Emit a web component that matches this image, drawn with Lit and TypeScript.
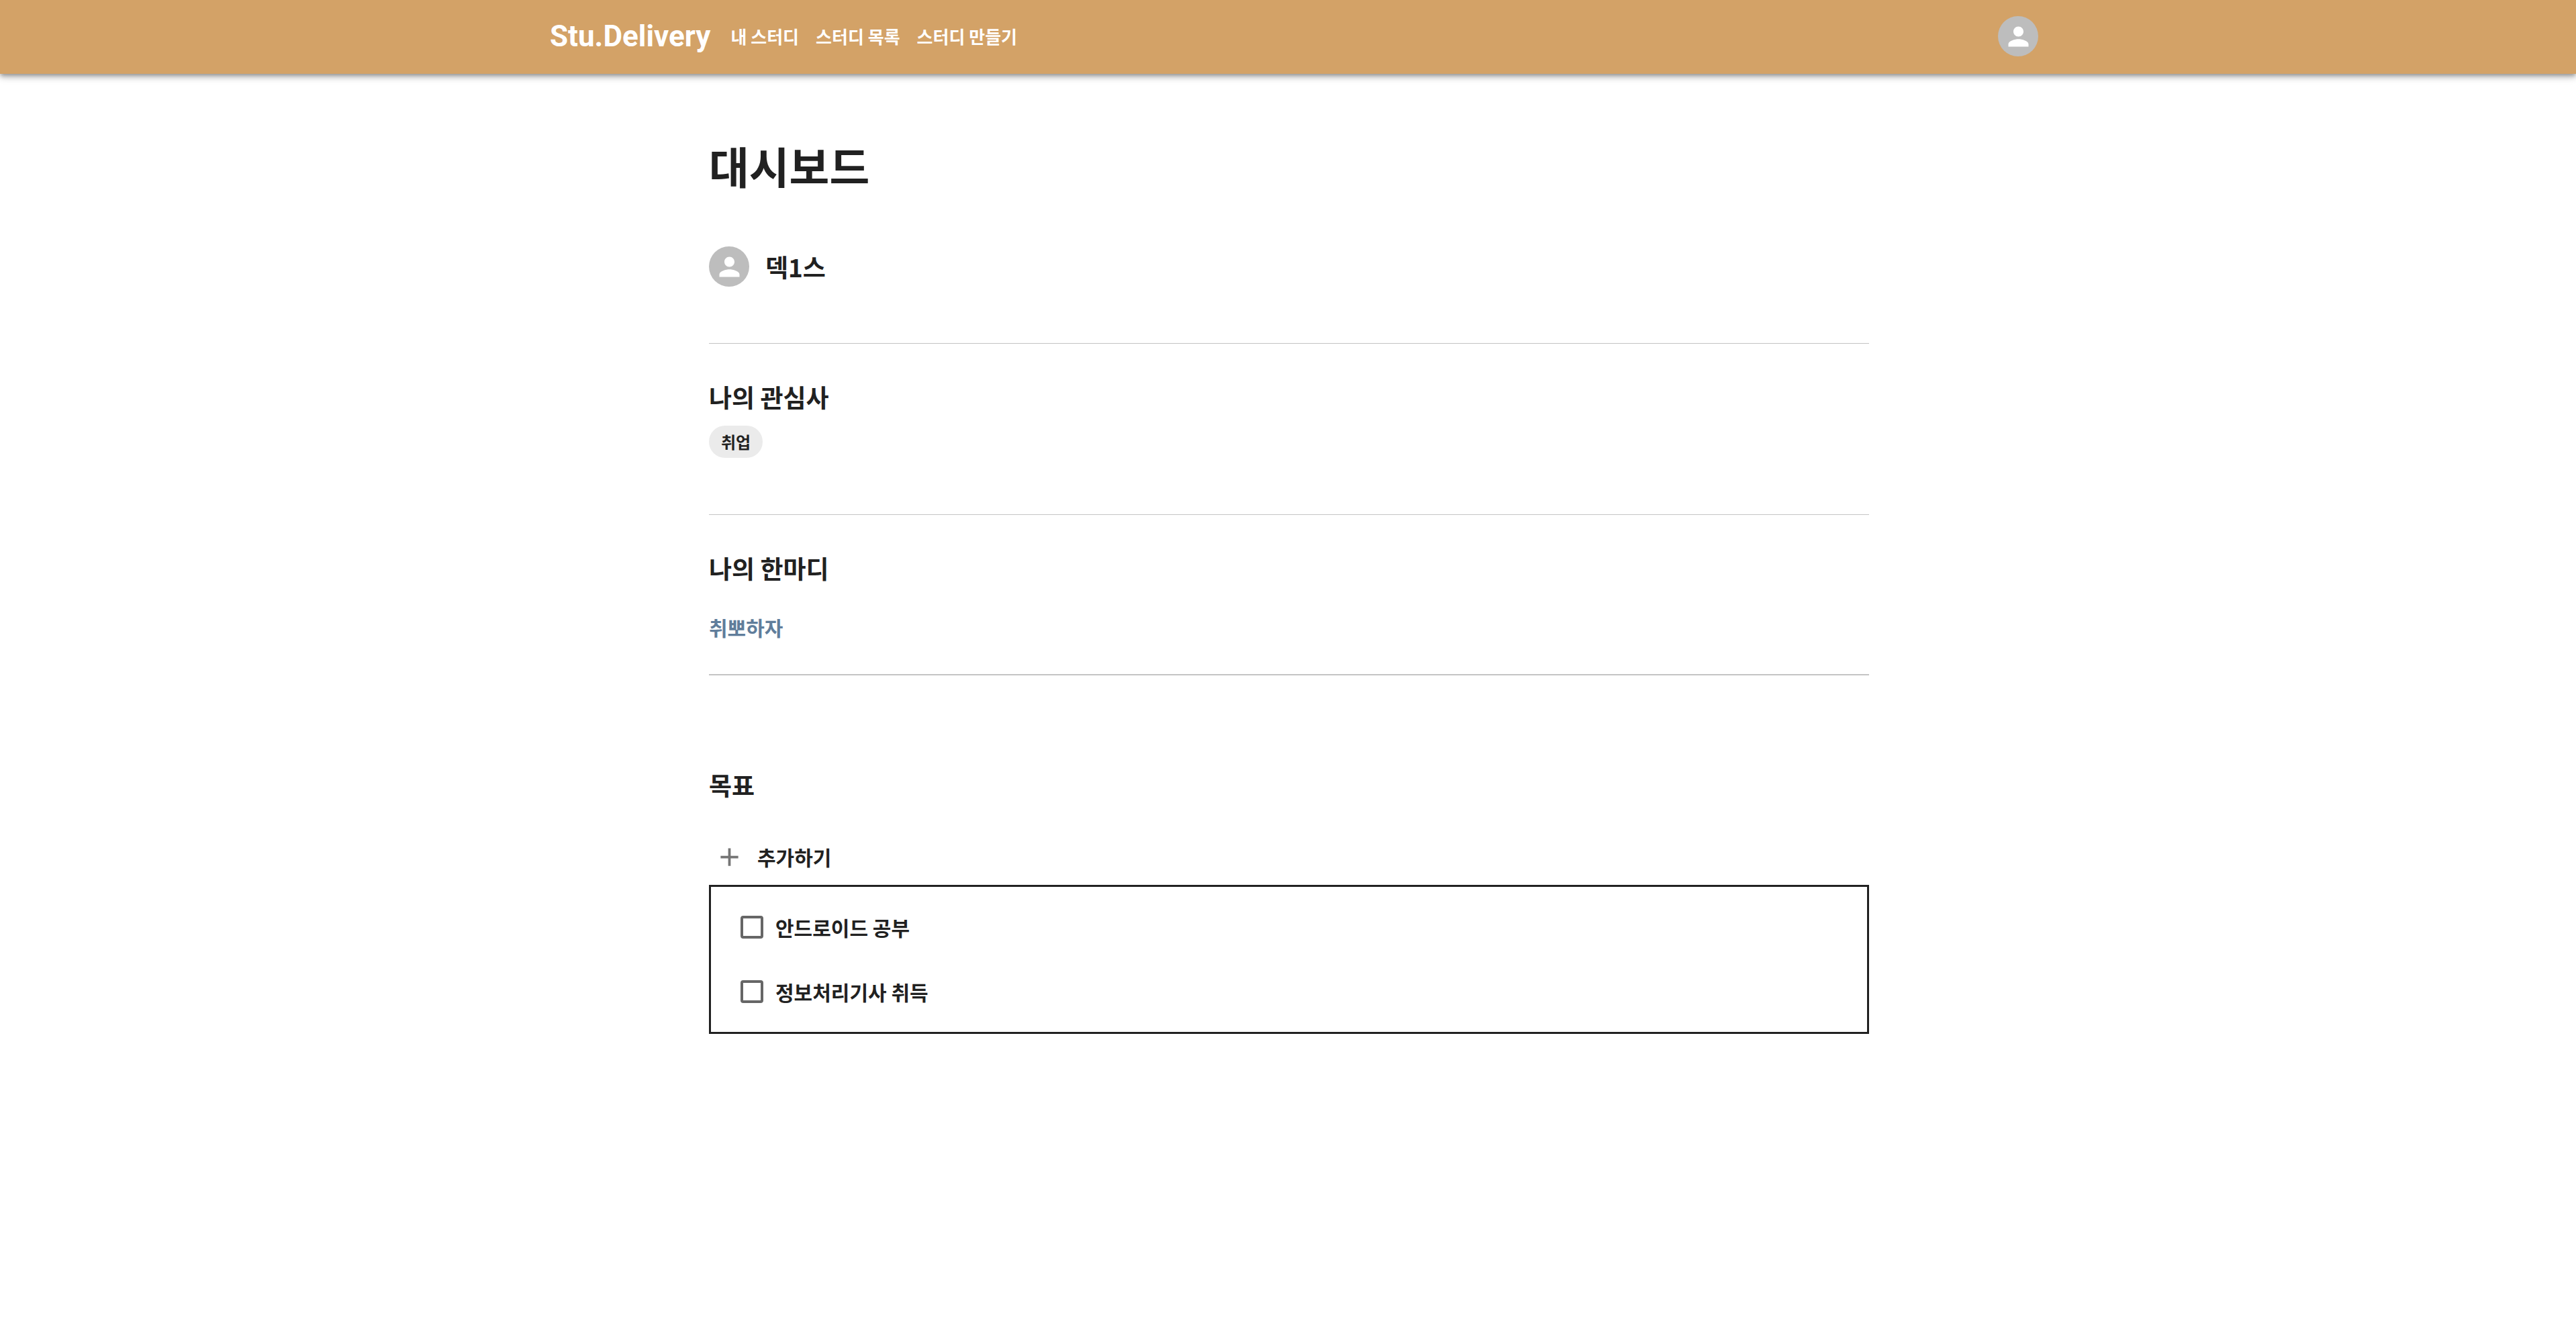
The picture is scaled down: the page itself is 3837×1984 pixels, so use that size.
import { LitElement, html, css, svg } from "lit";
import { customElement, state } from "lit/decorators.js";

const personIcon = svg`<path fill="currentColor" d="M12 12c2.21 0 4-1.79 4-4s-1.79-4-4-4-4 1.79-4 4 1.79 4 4 4zm0 2c-2.67 0-8 1.34-8 4v2h16v-2c0-2.66-5.33-4-8-4z"/>`;

@customElement("user-avatar")
class UserAvatar extends LitElement {
  static styles = css`
    :host {
      display: flex;
      align-items: center;
      justify-content: center;
      flex: none;
      width: 60px;
      height: 60px;
      border-radius: 50%;
      background: #bdbdbd;
      color: #fff;
    }
    .icon {
      width: 45px;
      height: 45px;
    }
  `;

  render() {
    return html`<svg class="icon" viewBox="0 0 24 24" aria-hidden="true">${personIcon}</svg>`;
  }
}

@customElement("app-header")
class AppHeader extends LitElement {
  static styles = css`
    :host {
      display: block;
      background: #d3a267;
      color: #fff;
      box-shadow:
        0 3px 6px -1px rgba(0, 0, 0, 0.3),
        0 6px 8px rgba(0, 0, 0, 0.14),
        0 2px 15px rgba(0, 0, 0, 0.12);
    }
    .bar {
      box-sizing: border-box;
      display: flex;
      align-items: center;
      max-width: 2235px;
      min-height: 110px;
      margin: 0 auto;
      padding: 0 0 2px 18px;
    }
    a {
      color: inherit;
      text-decoration: none;
    }
    .logo {
      margin-right: 30px;
      font: 700 44px/56px Roboto, "Liberation Sans", sans-serif;
    }
    .links {
      display: flex;
      flex: 1;
      gap: 25px;
      font-size: 26px;
      line-height: 40px;
      font-weight: 700;
    }
    .account {
      padding: 0;
      border: 0;
      border-radius: 50%;
      background: none;
      cursor: pointer;
    }
  `;

  render() {
    return html`
      <header class="bar">
        <a class="logo" href="#">Stu.Delivery</a>
        <nav class="links">
          <a href="#my">내 스터디</a>
          <a href="#list">스터디 목록</a>
          <a href="#new">스터디 만들기</a>
        </nav>
        <button class="account" type="button" aria-label="계정"><user-avatar></user-avatar></button>
      </header>
    `;
  }
}

@customElement("app-root")
class AppRoot extends LitElement {
  static styles = css`
    :host {
      display: block;
      color: #212121;
      font-family: "Noto Sans CJK KR", sans-serif;
      font-weight: 700;
    }
    .page {
      max-width: 1728px;
      margin: 0 auto;
      padding: 92px 0 96px 3px;
    }
    h1,
    h2,
    p,
    ul {
      margin: 0;
      padding: 0;
    }
    h1 {
      font-size: 65px;
      line-height: 88px;
    }
    h2 {
      font-size: 37px;
      line-height: 56px;
    }
    .profile {
      display: flex;
      align-items: center;
      gap: 24px;
      padding: 77px 0 84px;
    }
    .section {
      border-top: 1px solid #c4c4c4;
      padding: 51px 0 84px;
    }
    .chips {
      display: flex;
      gap: 12px;
      padding-top: 15px;
      list-style: none;
    }
    .chip {
      padding: 0 18px;
      border-radius: 24px;
      background: #ebebeb;
      font-size: 24px;
      line-height: 48px;
    }
    .motto {
      padding-bottom: 48px;
      border-bottom: 2px solid #c4c4c4;
    }
    .motto p {
      padding-top: 38px;
      color: #607d9b;
      font-size: 30px;
      line-height: 44px;
    }
    .goals {
      padding-top: 135px;
    }
    .add {
      display: flex;
      align-items: center;
      gap: 19px;
      margin-top: 49px;
      padding: 0 0 0 8px;
      border: 0;
      background: none;
      color: inherit;
      font: inherit;
      font-size: 30px;
      line-height: 60px;
      cursor: pointer;
    }
    .plus {
      width: 45px;
      height: 45px;
      color: #757575;
    }
    .list {
      margin-top: 12px;
      padding: 12px 39px;
      border: 3px solid #212121;
      list-style: none;
    }
    .goal {
      display: flex;
      align-items: center;
      gap: 18px;
      height: 96px;
      font-size: 30px;
      line-height: 44px;
      cursor: pointer;
    }
    .check {
      appearance: none;
      box-sizing: border-box;
      width: 34px;
      height: 34px;
      margin: 0 0 0 5px;
      border: 4px solid #666;
      border-radius: 4px;
    }
    .check:checked {
      background: #666;
    }
  `;

  @state() private goals = ["안드로이드 공부", "정보처리기사 취득"];

  render() {
    return html`
      <app-header></app-header>
      <main class="page">
        <h1>대시보드</h1>
        <div class="profile">
          <user-avatar></user-avatar>
          <h2>덱1스</h2>
        </div>
        <section class="section">
          <h2>나의 관심사</h2>
          <ul class="chips">
            <li class="chip">취업</li>
          </ul>
        </section>
        <section class="section motto">
          <h2>나의 한마디</h2>
          <p>취뽀하자</p>
        </section>
        <section class="goals">
          <h2>목표</h2>
          <button class="add" type="button">
            <svg class="plus" viewBox="0 0 24 24" aria-hidden="true">
              <path fill="currentColor" d="M19 13h-6v6h-2v-6H5v-2h6V5h2v6h6v2z" />
            </svg>
            추가하기
          </button>
          <ul class="list">
            ${this.goals.map(
              (goal) => html`
                <li>
                  <label class="goal"><input class="check" type="checkbox" />${goal}</label>
                </li>
              `,
            )}
          </ul>
        </section>
      </main>
    `;
  }
}
